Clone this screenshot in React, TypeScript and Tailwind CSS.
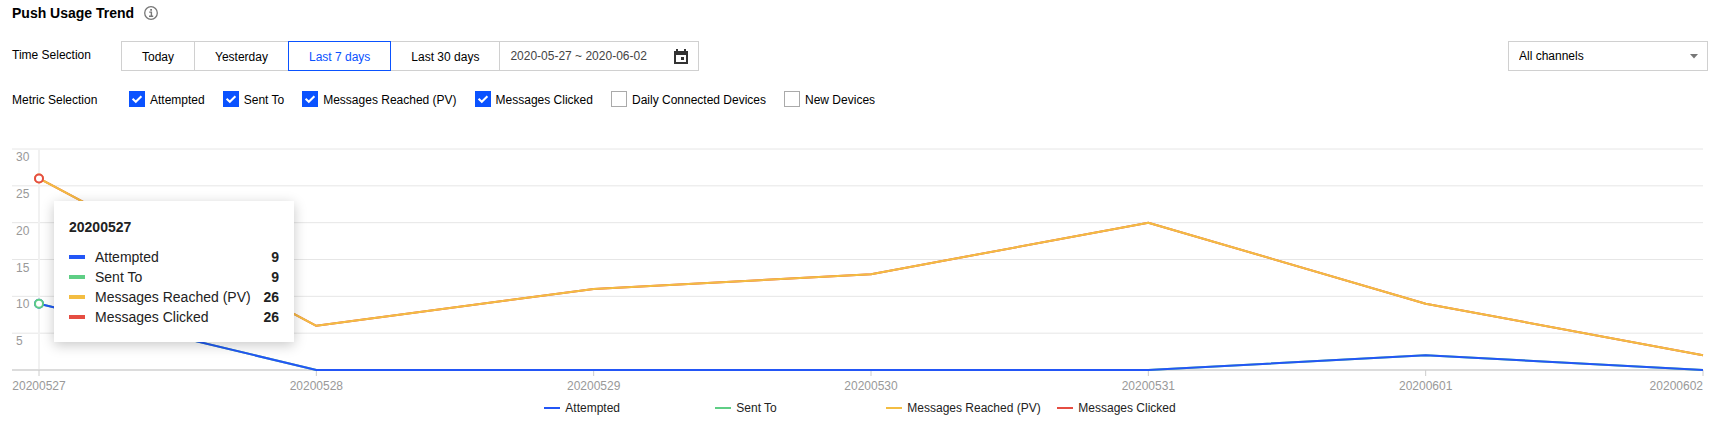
import React, { useEffect, useRef, useState } from 'react';

const COLORS = {
  blue: '#2356f6',
  green: '#5fce85',
  yellow: '#f3bd42',
  red: '#e54d42'
};

const DATES = ['20200527', '20200528', '20200529', '20200530', '20200531', '20200601', '20200602'];

const SERIES = [
  { name: 'Attempted', color: COLORS.blue, swatch: 'bg-[#2356f6]', values: [9, 0, 0, 0, 0, 2, 0] },
  { name: 'Sent To', color: COLORS.green, swatch: 'bg-[#5fce85]', values: [9, 0, 0, 0, 0, 2, 0] },
  { name: 'Messages Reached (PV)', color: COLORS.yellow, swatch: 'bg-[#f3bd42]', values: [26, 6, 11, 13, 20, 9, 2] },
  { name: 'Messages Clicked', color: COLORS.red, swatch: 'bg-[#e54d42]', values: [26, 6, 11, 13, 20, 9, 2] }
];

const RANGES = ['Today', 'Yesterday', 'Last 7 days', 'Last 30 days'];

const METRICS = [
  { name: 'Attempted', on: true },
  { name: 'Sent To', on: true },
  { name: 'Messages Reached (PV)', on: true },
  { name: 'Messages Clicked', on: true },
  { name: 'Daily Connected Devices', on: false },
  { name: 'New Devices', on: false }
];

function InfoIcon() {
  return (
    <svg width="14" height="14" viewBox="0 0 14 14" fill="none" stroke="#777" aria-hidden="true">
      <circle cx="7" cy="7" r="6.3" strokeWidth="1.3" />
      <path d="M5.2 6.1H7.4V10M5 10.2H9.2" strokeWidth="1.4" />
      <path d="M6.2 3.9H8" strokeWidth="1.7" />
    </svg>
  );
}

function CalendarIcon() {
  return (
    <svg width="14" height="15" viewBox="0 0 14 15" aria-hidden="true">
      <path
        fill="#333"
        fillRule="evenodd"
        d="M2 0h2v2h6V0h2v2h2v13H0V2h2V0ZM2 6v7h10V6H2ZM7 8h3v3H7V8Z"
      />
    </svg>
  );
}

function RangeTabs() {
  const [active, setActive] = useState('Last 7 days');

  return (
    <div className="flex">
      {RANGES.map((r) => (
        <button
          key={r}
          type="button"
          onClick={() => setActive(r)}
          className={`relative -mr-px h-[30px] border px-5 pt-[2px] ${
            active === r ? 'z-10 border-[#0a52ff] text-[#0a52ff]' : 'border-[#d0d0d0] text-black'
          }`}
        >
          {r}
        </button>
      ))}
      <div className="flex h-[30px] w-[200px] items-center border border-[#d0d0d0] px-2.5">
        <input
          type="text"
          readOnly
          aria-label="Date range"
          value="2020-05-27 ~ 2020-06-02"
          className="min-w-0 flex-1 text-[#444] outline-none"
        />
        <button type="button" aria-label="Open calendar">
          <CalendarIcon />
        </button>
      </div>
    </div>
  );
}

function Metric({ name, on }: { name: string; on: boolean }) {
  const [checked, setChecked] = useState(on);

  return (
    <label className="flex items-center gap-[5px]">
      <span className="relative block h-4 w-4">
        <input
          type="checkbox"
          checked={checked}
          onChange={() => setChecked(!checked)}
          className="block h-4 w-4 appearance-none border border-[#aaa] bg-white checked:border-[#0a52ff] checked:bg-[#0a52ff]"
        />
        {checked && (
          <svg className="pointer-events-none absolute inset-0" width="16" height="16" viewBox="0 0 16 16" fill="none" aria-hidden="true">
            <path d="M3.6 7.8L6.8 10.8L12.4 5.2" stroke="#fff" strokeWidth="2" />
          </svg>
        )}
      </span>
      <span className="pt-0.5">{name}</span>
    </label>
  );
}

const HEIGHT = 260;
const TOP = 14;
const BASE = 235;
const LEFT = 27;

function TrendChart() {
  const ref = useRef<HTMLDivElement>(null);
  const [width, setWidth] = useState(1692);

  useEffect(() => {
    const el = ref.current;
    if (!el) return;
    const update = () => setWidth(el.clientWidth);
    update();
    const observer = new ResizeObserver(update);
    observer.observe(el);
    return () => observer.disconnect();
  }, []);

  const x = (i: number) => LEFT + (i * (width - 1 - LEFT)) / (DATES.length - 1);
  const y = (v: number) => BASE - (v * (BASE - TOP)) / 30;
  const points = (values: number[]) => values.map((v, i) => `${x(i)},${y(v)}`).join(' ');
  const anchor = (i: number) => (i === DATES.length - 1 ? 'end' : 'middle');

  // blue and yellow sit on top of the series that share their values
  const order = [SERIES[1], SERIES[0], SERIES[3], SERIES[2]];

  return (
    <div ref={ref} className="relative">
      <svg className="block w-full" height={HEIGHT} role="img" aria-label="Push usage trend">
        {[30, 25, 20, 15, 10, 5].map((v) => (
          <g key={v}>
            <line x1="0" x2={width - 1} y1={y(v)} y2={y(v)} stroke="#e6e6e6" />
            <text x="4" y={y(v) + 12} fontSize="12" fill="#999">{v}</text>
          </g>
        ))}
        <line x1={LEFT} x2={LEFT} y1={TOP} y2={BASE} stroke="#f1f1f1" strokeWidth="2" />
        <line x1="0" x2={width - 1} y1={BASE} y2={BASE} stroke="#dcdcdc" strokeWidth="2" />
        {DATES.map((d, i) => (
          <g key={d}>
            <line x1={x(i)} x2={x(i)} y1={BASE} y2={BASE + 6} stroke="#ccc" />
            <text x={x(i)} y={BASE + 20} fontSize="12" fill="#999" textAnchor={anchor(i)}>{d}</text>
          </g>
        ))}
        {order.map((s) => (
          <polyline key={s.name} points={points(s.values)} fill="none" stroke={s.color} strokeWidth="2" strokeLinejoin="round" />
        ))}
        {SERIES.map((s) => (
          <circle key={s.name} cx={x(0)} cy={y(s.values[0])} r="4" fill="#fff" stroke={s.color} strokeWidth="2" />
        ))}
      </svg>

      <div className="absolute top-[66px] left-[42px] w-60 bg-white px-[15px] pt-4 pb-[15px] text-sm leading-5 text-[#222] shadow-[0_3px_12px_rgba(0,0,0,0.22)]">
        <div className="mb-2.5 font-bold">{DATES[0]}</div>
        {SERIES.map((s) => (
          <div key={s.name} className="flex items-center">
            <span className={`mr-2.5 h-1 w-4 ${s.swatch}`} />
            <span className="flex-1">{s.name}</span>
            <span className="font-bold">{s.values[0]}</span>
          </div>
        ))}
      </div>
    </div>
  );
}

export default function App() {
  return (
    <main className="bg-white pr-[15px] pb-7 pl-3 font-['Liberation_Sans',Arial,sans-serif] text-xs text-black">
      <div className="flex items-center gap-2.5 pt-[3px]">
        <h1 className="text-sm font-bold">Push Usage Trend</h1>
        <InfoIcon />
      </div>

      <div className="mt-[18px] flex items-center">
        <span className="w-[109px] pb-[2px]">Time Selection</span>
        <RangeTabs />
        <div className="relative ml-auto w-[200px]">
          <select aria-label="Channel" className="h-[30px] w-full appearance-none border border-[#d0d0d0] bg-white px-2.5">
            <option>All channels</option>
          </select>
          <svg className="pointer-events-none absolute top-3 right-2.5" width="8" height="6" viewBox="0 0 8 6" aria-hidden="true">
            <path d="M0 1H8L4 5.6Z" fill="#777" />
          </svg>
        </div>
      </div>

      <div className="mt-[19px] flex items-center">
        <span className="w-[117px] pt-0.5">Metric Selection</span>
        <div className="flex gap-[18px]">
          {METRICS.map((m) => (
            <Metric key={m.name} name={m.name} on={m.on} />
          ))}
        </div>
      </div>

      <div className="mt-[27px] pr-1">
        <TrendChart />
      </div>

      <div className="mt-[5px] flex justify-center text-[#222]">
        {SERIES.map((s) => (
          <div key={s.name} className="flex min-w-0 items-center gap-[5px] not-last:w-[171px]">
            <span className={`h-[2px] w-4 ${s.swatch}`} />
            <span>{s.name}</span>
          </div>
        ))}
      </div>
    </main>
  );
}
